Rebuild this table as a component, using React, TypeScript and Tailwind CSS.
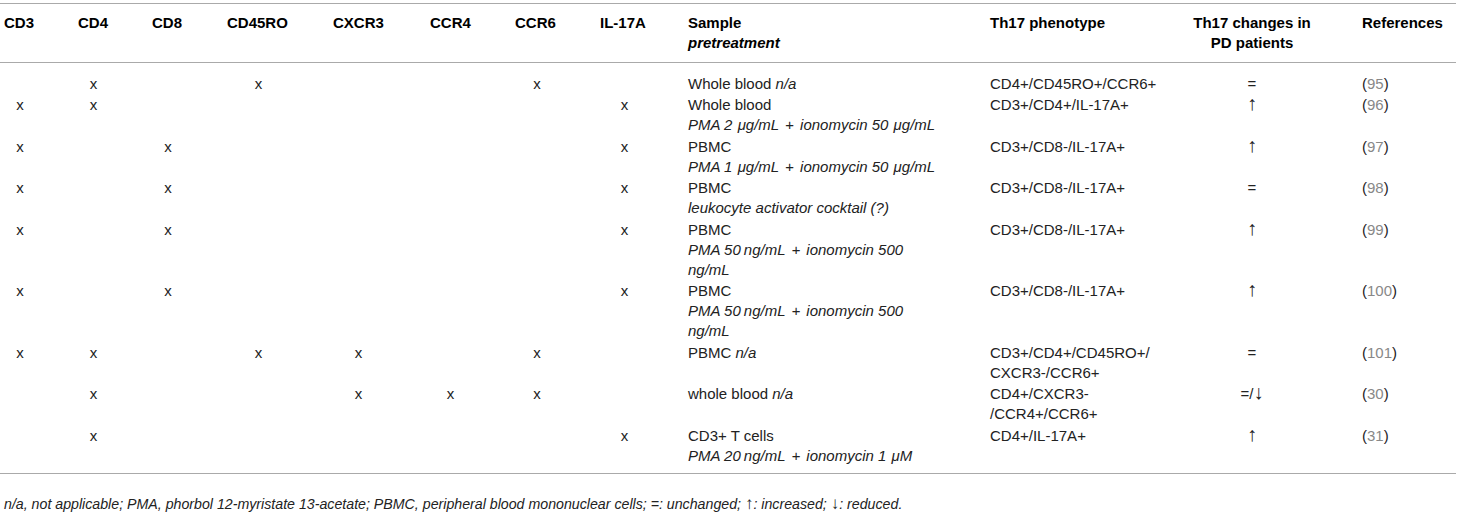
import React from "react";

const GRID =
  "grid grid-cols-[74px_74px_75px_106px_97px_85px_85px_88px_302px_174px_176px_1fr] pl-[4px]";

const markerW = [
  "w-[32px]",
  "w-[31px]",
  "w-[32px]",
  "w-[63px]",
  "w-[51px]",
  "w-[41px]",
  "w-[44px]",
  "w-[49px]",
];

const Mu = () => <span className="ml-[1px]">μ</span>;
const Plus = () => <span className="mx-[2px]">+</span>;
const Arrow = ({ c }: { c: string }) => (
  <span className="text-[20px] leading-[0]">{c}</span>
);
const SmallArrow = ({ c }: { c: string }) => (
  <span className="text-[17px] leading-[0]">{c}</span>
);

type Row = {
  m: number[];
  sample: React.ReactNode;
  pheno: React.ReactNode;
  change: React.ReactNode;
  ref: string;
};

const rows: Row[] = [
  {
    m: [1, 3, 6],
    sample: (
      <>
        Whole blood <i>n/a</i>
      </>
    ),
    pheno: "CD4+/CD45RO+/CCR6+",
    change: "=",
    ref: "95",
  },
  {
    m: [0, 1, 7],
    sample: (
      <>
        Whole blood
        <br />
        <i>
          PMA 2 <Mu />g/mL <Plus /> ionomycin 50 <Mu />g/mL
        </i>
      </>
    ),
    pheno: "CD3+/CD4+/IL-17A+",
    change: <Arrow c="↑" />,
    ref: "96",
  },
  {
    m: [0, 2, 7],
    sample: (
      <>
        PBMC
        <br />
        <i>
          PMA 1 <Mu />g/mL <Plus /> ionomycin 50 <Mu />g/mL
        </i>
      </>
    ),
    pheno: "CD3+/CD8-/IL-17A+",
    change: <Arrow c="↑" />,
    ref: "97",
  },
  {
    m: [0, 2, 7],
    sample: (
      <>
        PBMC
        <br />
        <i>leukocyte activator cocktail (?)</i>
      </>
    ),
    pheno: "CD3+/CD8-/IL-17A+",
    change: "=",
    ref: "98",
  },
  {
    m: [0, 2, 7],
    sample: (
      <>
        PBMC
        <br />
        <i>
          PMA 50{"\u2009"}ng/mL <Plus /> ionomycin 500
        </i>
        <br />
        <i>ng/mL</i>
      </>
    ),
    pheno: "CD3+/CD8-/IL-17A+",
    change: <Arrow c="↑" />,
    ref: "99",
  },
  {
    m: [0, 2, 7],
    sample: (
      <>
        PBMC
        <br />
        <i>
          PMA 50{"\u2009"}ng/mL <Plus /> ionomycin 500
        </i>
        <br />
        <i>ng/mL</i>
      </>
    ),
    pheno: "CD3+/CD8-/IL-17A+",
    change: <Arrow c="↑" />,
    ref: "100",
  },
  {
    m: [0, 1, 3, 4, 6],
    sample: (
      <>
        PBMC <i>n/a</i>
      </>
    ),
    pheno: (
      <>
        CD3+/CD4+/CD45RO+/
        <br />
        CXCR3-/CCR6+
      </>
    ),
    change: "=",
    ref: "101",
  },
  {
    m: [1, 4, 5, 6],
    sample: (
      <>
        whole blood <i>n/a</i>
      </>
    ),
    pheno: (
      <>
        CD4+/CXCR3-
        <br />
        /CCR4+/CCR6+
      </>
    ),
    change: (
      <>
        =/<Arrow c="↓" />
      </>
    ),
    ref: "30",
  },
  {
    m: [1, 7],
    sample: (
      <>
        CD3+ T cells
        <br />
        <i>
          PMA 20{"\u2009"}ng/mL <Plus /> ionomycin 1 <Mu />M
        </i>
      </>
    ),
    pheno: "CD4+/IL-17A+",
    change: <Arrow c="↑" />,
    ref: "31",
  },
];

const headers = ["CD3", "CD4", "CD8", "CD45RO", "CXCR3", "CCR4", "CCR6", "IL-17A"];

export default function App() {
  return (
    <div
      className="w-[1460px] h-[518px] bg-white text-[#222] overflow-hidden"
      style={{ fontFamily: '"Liberation Sans", Arial, sans-serif' }}
    >
      <div className="pt-[3px] pr-[4px]">
        <div className="border-t border-b border-[#aaa]">
          <div className={`${GRID} py-[9px] text-[15px] leading-[20px] font-bold text-black`}>
            {headers.map((h) => (
              <div key={h}>{h}</div>
            ))}
            <div>
              Sample
              <br />
              <i>pretreatment</i>
            </div>
            <div>Th17 phenotype</div>
            <div className="text-center">
              Th17 changes in
              <br />
              PD patients
            </div>
            <div className="pl-[22px]">References</div>
          </div>
        </div>
        <div className="border-b border-[#aaa] pt-[10px] pb-[6px] text-[15px] leading-[20px]">
          {rows.map((r, i) => (
            <div key={i} className={`${GRID} py-[0.75px]`}>
              {markerW.map((w, c) => (
                <div key={c}>
                  {r.m.includes(c) ? (
                    <span className={`inline-block text-center ${w}`}>x</span>
                  ) : null}
                </div>
              ))}
              <div>{r.sample}</div>
              <div>{r.pheno}</div>
              <div className="text-center">{r.change}</div>
              <div className="pl-[22px]">
                (<span className="text-[#888]">{r.ref}</span>)
              </div>
            </div>
          ))}
        </div>
        <div className="pl-[4px] pt-[20px] text-[14.2px] leading-[20px] italic">
          n/a, not applicable; PMA, phorbol 12-myristate 13-acetate; PBMC, peripheral blood
          mononuclear cells; =: unchanged; <SmallArrow c="↑" />: increased;{" "}
          <SmallArrow c="↓" />: reduced.
        </div>
      </div>
    </div>
  );
}
